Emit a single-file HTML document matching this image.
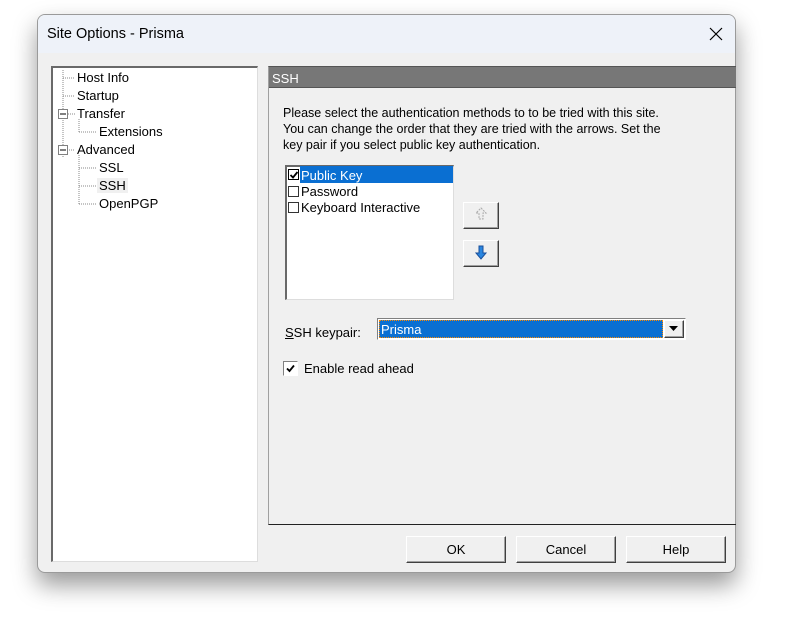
<!DOCTYPE html>
<html><head><style>
body{margin:0;width:797px;height:636px;background:#fff;position:relative;overflow:hidden;font-family:"Liberation Sans",sans-serif;font-size:12px;color:#000}
.a{position:absolute}
.win{left:37px;top:14px;width:699px;height:559px;background:#f0f0f0;border:1px solid #9a9a9a;border-radius:8px;box-shadow:0 12px 24px rgba(0,0,0,.4);overflow:hidden;box-sizing:border-box}
.title{left:0;top:0;width:699px;height:38px;background:#eef2f9}
.btn{background:#f0f0f0;border:1px solid;border-color:#fff #404040 #404040 #fff;box-shadow:inset -1px -1px 0 #a0a0a0;box-sizing:border-box;text-align:center;font-size:13px;line-height:25px}
.t{font-size:13px;white-space:nowrap}
.cb{width:11px;height:11px;border:1px solid #333;background:#fff;box-sizing:border-box}
</style></head><body>
<div class="a win">
 <div class="a title"></div>
 <div class="a" style="left:9px;top:11px;font-size:14.5px">Site Options - Prisma</div>
 <svg class="a" style="left:671px;top:12px" width="14" height="14"><path d="M1 1L13 13M13 1L1 13" stroke="#000" stroke-width="1.2"/></svg>
</div>
<!-- tree -->
<div class="a" style="left:51px;top:66px;width:207px;height:496px;background:#fff;border:1px solid;border-color:#808080 #ddd #ddd #808080;box-sizing:border-box;border-left:2px solid #696969;border-top:2px solid #696969"></div>
<svg class="a" style="left:53px;top:68px" width="90" height="140">
<g stroke="#888" stroke-dasharray="1,1" fill="none">
<path d="M10 2V90M10 10H22M10 28H22M15 46H22M10 82H22M26 51V64M26 64H44M26 87V136M26 100H44M26 118H44M26 136H44"/>
</g>
<rect x="5.5" y="41.5" width="9" height="9" fill="#fff" stroke="#808080"/><path d="M7 46H13" stroke="#000"/>
<rect x="5.5" y="77.5" width="9" height="9" fill="#fff" stroke="#808080"/><path d="M7 82H13" stroke="#000"/>
</svg>
<div class="a t" style="left:77px;top:70px">Host Info</div>
<div class="a t" style="left:77px;top:88px">Startup</div>
<div class="a t" style="left:77px;top:106px">Transfer</div>
<div class="a t" style="left:99px;top:124px">Extensions</div>
<div class="a t" style="left:77px;top:142px">Advanced</div>
<div class="a t" style="left:99px;top:160px">SSL</div>
<div class="a t" style="left:97px;top:178px;background:#f0f0f0;padding:0 2px">SSH</div>
<div class="a t" style="left:99px;top:196px">OpenPGP</div>
<!-- right panel -->
<div class="a" style="left:268px;top:66px;width:468px;height:459px;border-left:1px solid #a0a0a0;border-top:1px solid #555;border-bottom:1px solid #222;box-sizing:border-box"></div>
<div class="a" style="left:269px;top:67px;width:467px;height:21px;background:#777;border-bottom:1px solid #555;box-sizing:border-box"></div>
<div class="a t" style="left:272px;top:71px;color:#fff">SSH</div>
<div class="a" style="left:283px;top:105px;font-size:12.5px;line-height:16px;white-space:nowrap">Please select the authentication methods to to be tried with this site.<br>You can change the order that they are tried with the arrows. Set the<br>key pair if you select public key authentication.</div>
<!-- list -->
<div class="a" style="left:285px;top:165px;width:169px;height:135px;background:#fff;border:1px solid;border-color:#696969 #ddd #ddd #696969;border-width:2px 1px 1px 2px;box-sizing:border-box"></div>
<div class="a" style="left:300px;top:166px;width:153px;height:17px;background:#0a6fd2"></div>
<div class="a cb" style="left:288px;top:169px;border-color:#000"></div>
<svg class="a" style="left:289px;top:170px" width="10" height="10"><path d="M1.5 5L4 7.5L8.5 2" stroke="#000" stroke-width="1.8" fill="none"/></svg>
<div class="a t" style="left:301px;top:168px;color:#fff">Public Key</div>
<div class="a cb" style="left:288px;top:186px"></div>
<div class="a t" style="left:301px;top:184px">Password</div>
<div class="a cb" style="left:288px;top:202px"></div>
<div class="a t" style="left:301px;top:200px">Keyboard Interactive</div>
<!-- arrows -->
<div class="a btn" style="left:463px;top:202px;width:36px;height:27px"></div>
<svg class="a" style="left:474px;top:206px" width="14" height="18"><path d="M7 2L12 7H9V13H5V7H2Z" fill="#eee" stroke="#aaa" stroke-dasharray="2,1"/></svg>
<div class="a btn" style="left:463px;top:240px;width:36px;height:27px"></div>
<svg class="a" style="left:474px;top:244px" width="14" height="18"><path d="M5 2H9V9H12L7 15L2 9H5Z" fill="#2a86e0" stroke="#1a4f9a"/></svg>
<!-- combo -->
<div class="a t" style="left:285px;top:325px"><u>S</u>SH keypair:</div>
<div class="a" style="left:377px;top:318px;width:309px;height:22px;border:1px solid;border-color:#808080 #fff #fff #808080;background:#fff;box-sizing:border-box"></div>
<div class="a" style="left:379px;top:320px;width:284px;height:18px;background:#0a6fd2;outline:1px dotted #ff8a00;outline-offset:-1px"></div>
<div class="a t" style="left:381px;top:322px;color:#fff">Prisma</div>
<div class="a btn" style="left:664px;top:320px;width:20px;height:18px"></div>
<svg class="a" style="left:669px;top:326px" width="10" height="6"><path d="M0 0H9L4.5 5Z" fill="#000"/></svg>
<!-- checkbox -->
<div class="a" style="left:283px;top:361px;width:15px;height:15px;background:#fff;border:1px solid;border-color:#808080 #fff #fff #808080;box-sizing:border-box"></div>
<svg class="a" style="left:285px;top:363px" width="11" height="11"><path d="M2 5.5L4.5 8L9 2.5" stroke="#000" stroke-width="1.8" fill="none"/></svg>
<div class="a t" style="left:304px;top:361px">Enable read ahead</div>
<!-- buttons -->
<div class="a btn" style="left:406px;top:536px;width:100px;height:27px">OK</div>
<div class="a btn" style="left:516px;top:536px;width:100px;height:27px">Cancel</div>
<div class="a btn" style="left:626px;top:536px;width:100px;height:27px">Help</div>
</body></html>
